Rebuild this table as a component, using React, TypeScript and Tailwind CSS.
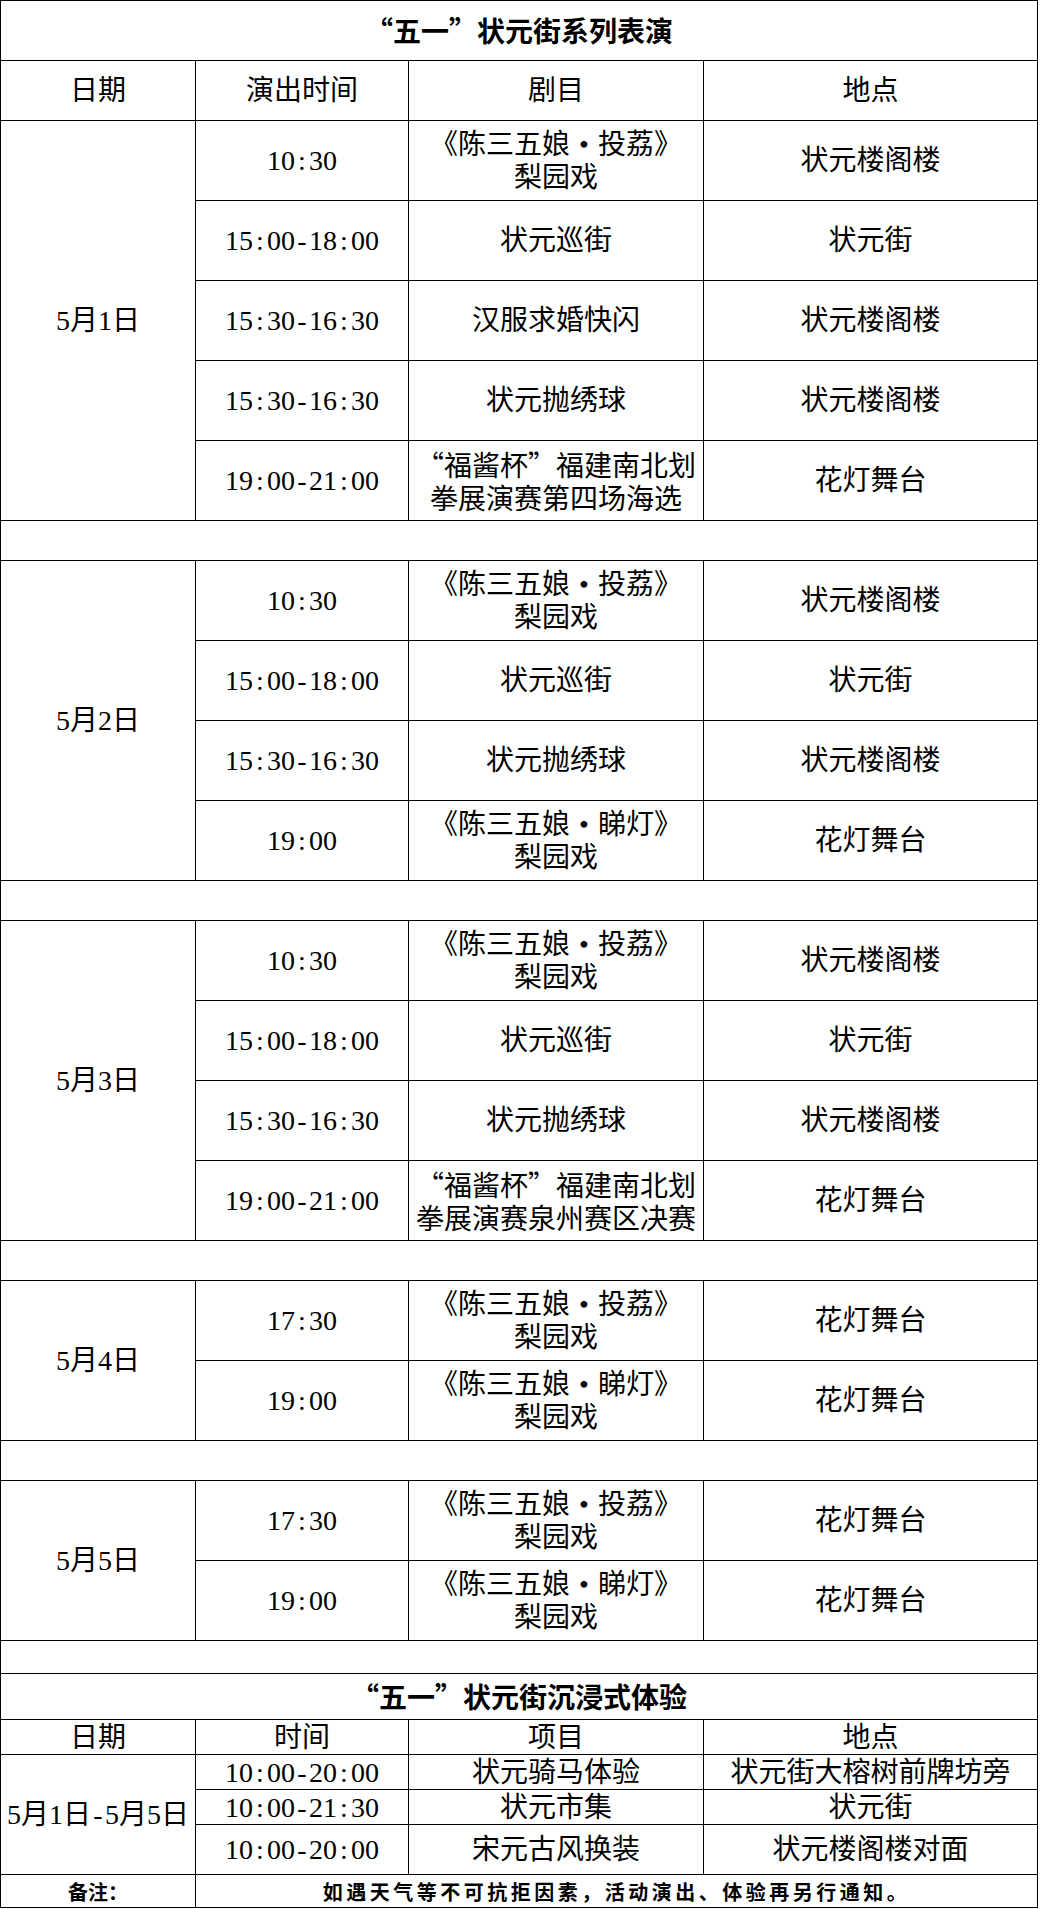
type Show = {
  time: string;
  title: string[];
  place: string;
};

type Section = {
  date: string;
  shows: Show[];
};

const serif = "font-['Liberation_Serif','Noto_Sans_CJK_SC',serif]";
const cjk = "font-['Noto_Sans_CJK_SC',sans-serif]";

const touli = ["《陈三五娘•投荔》", "梨园戏"];
const didi = ["《陈三五娘•睇灯》", "梨园戏"];

const sections: Section[] = [
  {
    date: "5月1日",
    shows: [
      { time: "10:30", title: touli, place: "状元楼阁楼" },
      { time: "15:00-18:00", title: ["状元巡街"], place: "状元街" },
      { time: "15:30-16:30", title: ["汉服求婚快闪"], place: "状元楼阁楼" },
      { time: "15:30-16:30", title: ["状元抛绣球"], place: "状元楼阁楼" },
      { time: "19:00-21:00", title: ["“福酱杯”福建南北划", "拳展演赛第四场海选"], place: "花灯舞台" },
    ],
  },
  {
    date: "5月2日",
    shows: [
      { time: "10:30", title: touli, place: "状元楼阁楼" },
      { time: "15:00-18:00", title: ["状元巡街"], place: "状元街" },
      { time: "15:30-16:30", title: ["状元抛绣球"], place: "状元楼阁楼" },
      { time: "19:00", title: didi, place: "花灯舞台" },
    ],
  },
  {
    date: "5月3日",
    shows: [
      { time: "10:30", title: touli, place: "状元楼阁楼" },
      { time: "15:00-18:00", title: ["状元巡街"], place: "状元街" },
      { time: "15:30-16:30", title: ["状元抛绣球"], place: "状元楼阁楼" },
      { time: "19:00-21:00", title: ["“福酱杯”福建南北划", "拳展演赛泉州赛区决赛"], place: "花灯舞台" },
    ],
  },
  {
    date: "5月4日",
    shows: [
      { time: "17:30", title: touli, place: "花灯舞台" },
      { time: "19:00", title: didi, place: "花灯舞台" },
    ],
  },
  {
    date: "5月5日",
    shows: [
      { time: "17:30", title: touli, place: "花灯舞台" },
      { time: "19:00", title: didi, place: "花灯舞台" },
    ],
  },
];

const experiences = [
  { time: "10:00-20:00", item: "状元骑马体验", place: "状元街大榕树前牌坊旁", h: "h-[35px]" },
  { time: "10:00-21:30", item: "状元市集", place: "状元街", h: "h-[35px]" },
  { time: "10:00-20:00", item: "宋元古风换装", place: "状元楼阁楼对面", h: "h-[50px]" },
];

// SimSun-like spacing: colon and hyphen take half an em, the dot a full em
function Txt({ s }: { s: string }) {
  return (
    <>
      {[...s].map((c, i) =>
        c === ":" || c === "-" ? (
          <span key={i} className="inline-block w-[0.5em] text-center">
            {c}
          </span>
        ) : c === "•" ? (
          <span key={i} className="inline-block w-[1em] text-center">
            {c}
          </span>
        ) : (
          <span key={i}>{c}</span>
        ),
      )}
    </>
  );
}

function Lines({ lines }: { lines: string[] }) {
  const font = lines.some((l) => l.includes("“")) ? cjk : serif;
  return (
    <div className={`text-center ${font}`}>
      {lines.map((l) => (
        <div key={l} className="whitespace-nowrap">
          <Txt s={l} />
        </div>
      ))}
    </div>
  );
}

function HeaderRow({ labels, h }: { labels: string[]; h: string }) {
  const widths = ["w-[195px]", "w-[213px]", "w-[295px]", "w-[334px]"];
  return (
    <div className={`flex border-b border-black ${h}`}>
      {labels.map((label, i) => (
        <div key={label} className={`flex items-center justify-center border-r border-black ${widths[i]}`}>
          {label}
        </div>
      ))}
    </div>
  );
}

function Gap({ h }: { h: string }) {
  return <div className={`border-b border-r border-black ${h}`} />;
}

function ShowSection({ section }: { section: Section }) {
  return (
    <div className="flex">
      <div className="flex w-[195px] items-center justify-center border-b border-r border-black">
        <Txt s={section.date} />
      </div>
      <div className="flex flex-col">
        {section.shows.map((show, i) => (
          <div key={i} className="flex h-[80px] border-b border-black">
            <div className="flex w-[213px] items-center justify-center border-r border-black">
              <Txt s={show.time} />
            </div>
            <div className="flex w-[295px] items-center justify-center border-r border-black">
              <Lines lines={show.title} />
            </div>
            <div className="flex w-[334px] items-center justify-center border-r border-black">
              {show.place}
            </div>
          </div>
        ))}
      </div>
    </div>
  );
}

export default function App() {
  return (
    <div className="min-h-screen bg-white">
      <div
        lang="zh-CN"
        className={`w-[1038px] border-l border-t border-black text-[28px] leading-[33px] text-black ${serif}`}
      >
        <div className={`flex h-[60px] items-center justify-center border-b border-r border-black font-bold ${cjk}`}>
          “五一”状元街系列表演
        </div>
        <HeaderRow labels={["日期", "演出时间", "剧目", "地点"]} h="h-[60px]" />

        {sections.map((section, i) => (
          <div key={section.date}>
            <ShowSection section={section} />
            <Gap h={i === sections.length - 1 ? "h-[33px]" : "h-[40px]"} />
          </div>
        ))}

        <div className={`flex h-[46px] items-center justify-center border-b border-r border-black font-bold ${cjk}`}>
          “五一”状元街沉浸式体验
        </div>
        <HeaderRow labels={["日期", "时间", "项目", "地点"]} h="h-[35px]" />

        <div className="flex">
          <div className="flex w-[195px] items-center justify-center border-b border-r border-black">
            <Txt s="5月1日-5月5日" />
          </div>
          <div className="flex flex-col">
            {experiences.map((row, i) => (
              <div key={i} className={`flex border-b border-black ${row.h}`}>
                <div className="flex w-[213px] items-center justify-center border-r border-black">
                  <Txt s={row.time} />
                </div>
                <div className="flex w-[295px] items-center justify-center border-r border-black">{row.item}</div>
                <div className="flex w-[334px] items-center justify-center border-r border-black whitespace-nowrap">
                  {row.place}
                </div>
              </div>
            ))}
          </div>
        </div>

        <div className={`flex h-[33px] border-b border-black text-[20px] font-bold ${cjk}`}>
          <div className="flex w-[195px] items-center justify-center border-r border-black">备注：</div>
          <div className="flex flex-1 items-center justify-center border-r border-black tracking-[3.5px]">
            如遇天气等不可抗拒因素，活动演出、体验再另行通知。
          </div>
        </div>
      </div>
    </div>
  );
}
